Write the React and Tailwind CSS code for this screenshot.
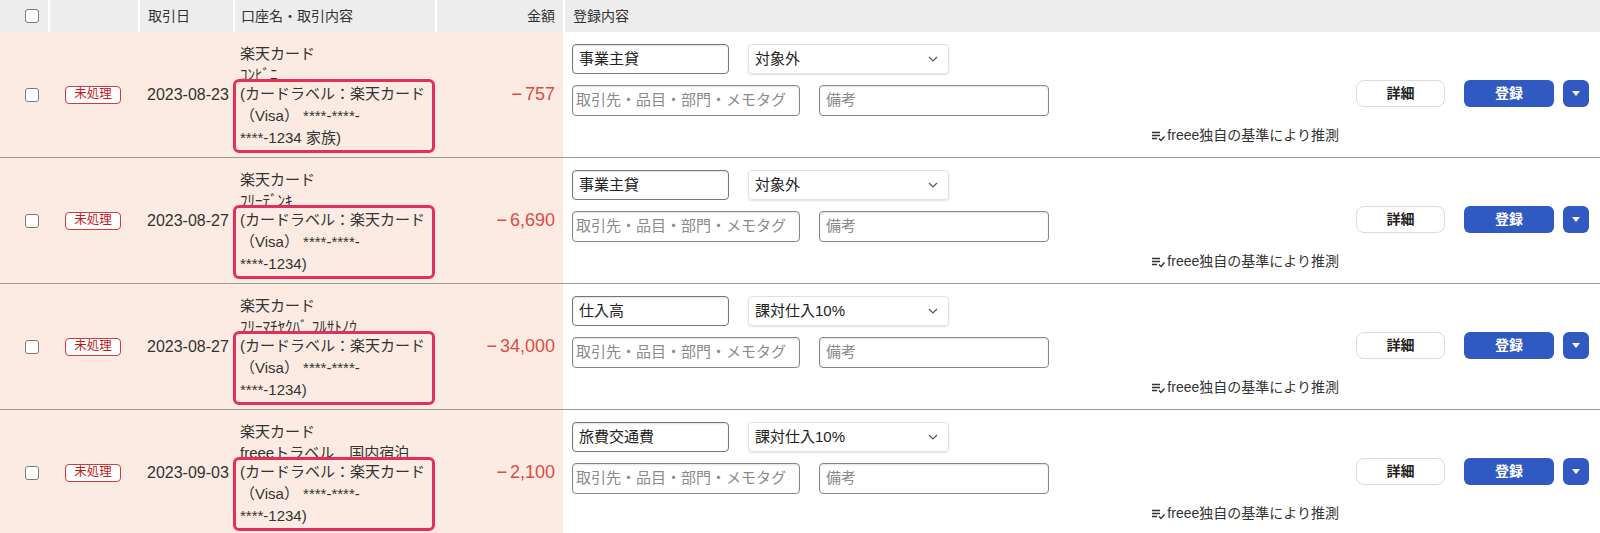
import React from "react";

const PINK = "bg-[#fbebe2]";

const rows = [
  {
    date: "2023-08-23",
    sub: "ｺﾝﾋﾞﾆ",
    last: "****-1234 家族)",
    amount: "757",
    account: "事業主貸",
    tax: "対象外",
  },
  {
    date: "2023-08-27",
    sub: "ﾌﾘｰﾃﾞﾝｷ",
    last: "****-1234)",
    amount: "6,690",
    account: "事業主貸",
    tax: "対象外",
  },
  {
    date: "2023-08-27",
    sub: "ﾌﾘｰﾏﾁﾔｸﾊﾞ ﾌﾙｻﾄﾉｳ",
    last: "****-1234)",
    amount: "34,000",
    account: "仕入高",
    tax: "課対仕入10%",
  },
  {
    date: "2023-09-03",
    sub: "freeeトラベル　国内宿泊",
    last: "****-1234)",
    amount: "2,100",
    account: "旅費交通費",
    tax: "課対仕入10%",
  },
];

function Checkbox() {
  return <div className="w-[14px] h-[14px] rounded-[3px] border border-[#7b7b7b] bg-white" />;
}

function GuessIcon() {
  return (
    <svg width="15" height="13" viewBox="0 0 15 13" className="shrink-0">
      <path d="M1 3.5h8M1 6.5h8M1 9.5h5" stroke="#333" strokeWidth="1.4" />
      <path d="M8 9.5l2 2 3.5-4" stroke="#333" strokeWidth="1.4" fill="none" />
    </svg>
  );
}

function Row({ r }) {
  return (
    <div className="flex border-b border-[#9a9a9a]">
      <div className={`w-[48px] ${PINK} flex items-center pl-[25px]`}>
        <Checkbox />
      </div>
      <div className={`w-[90px] ${PINK} flex items-center pl-[17px]`}>
        <span className="w-[56px] h-[18px] flex items-center justify-center rounded-[4px] border border-[#d23b3b] bg-white text-[12.5px] text-[#c41a1a]">
          未処理
        </span>
      </div>
      <div className={`w-[95px] ${PINK} flex items-center pl-[9px] text-[16px] text-[#333]`}>{r.date}</div>
      <div className={`w-[202px] ${PINK} px-[7px] pt-[11px] pb-[8px] text-[15px] text-[#333]`}>
        <div className="leading-[22px] whitespace-nowrap">楽天カード</div>
        <div className="relative top-[1px] leading-[18px] whitespace-nowrap">{r.sub}</div>
        <div className={`relative -mx-[7px] -my-[4px] px-[4px] py-[1px] border-[3px] border-[#e3305b] rounded-[6px] ${PINK} leading-[22px] whitespace-nowrap`}>
          <div>(カードラベル：楽天カード</div>
          <div>（Visa） ****-****-</div>
          <div>{r.last}</div>
        </div>
      </div>
      <div className={`w-[128px] ${PINK} flex items-center justify-end pr-[8px] text-[18px] text-[#de4c44]`}>
        <span className="mr-[3px]">−</span>
        <span>{r.amount}</span>
      </div>
      <div className="flex-1 bg-white flex pl-[9px] pr-[11px]">
        <div className="flex-1 pt-[12px]">
          <div className="flex gap-[19px]">
            <div className="w-[157px] h-[30px] flex items-center pl-[6px] rounded-[4px] border border-[#777] shadow-[inset_0_1px_2px_rgba(0,0,0,0.12)] text-[15px] text-[#222]">
              {r.account}
            </div>
            <div className="w-[201px] h-[30px] flex items-center justify-between pl-[6px] pr-[10px] rounded-[4px] border border-[#e2e2e2] shadow-[0_1px_2px_rgba(0,0,0,0.12)] text-[15px] text-[#222]">
              <span>{r.tax}</span>
              <svg width="10" height="6" viewBox="0 0 10 6">
                <path d="M1 1l4 4 4-4" stroke="#555" strokeWidth="1.2" fill="none" />
              </svg>
            </div>
          </div>
          <div className="flex gap-[19px] mt-[11px]">
            <div className="w-[228px] h-[31px] flex items-center pl-[3px] rounded-[4px] border border-[#888] shadow-[inset_0_1px_2px_rgba(0,0,0,0.12)] text-[15px] text-[#8a8a8a] whitespace-nowrap">
              取引先・品目・部門・メモタグ
            </div>
            <div className="w-[230px] h-[31px] flex items-center pl-[6px] rounded-[4px] border border-[#888] shadow-[inset_0_1px_2px_rgba(0,0,0,0.12)] text-[15px] text-[#8a8a8a]">
              備考
            </div>
          </div>
          <div className="flex justify-end items-center gap-[1px] mt-[11px] text-[14px] text-[#333] leading-[16px]">
            <GuessIcon />
            <span>freee独自の基準により推測</span>
          </div>
        </div>
        <div className="self-center flex items-center ml-[17px] mb-[2px]">
          <div className="w-[89px] h-[27px] flex items-center justify-center rounded-[8px] border border-[#dcdcdc] bg-white text-[14px] font-bold text-[#222]">
            詳細
          </div>
          <div className="w-[90px] h-[27px] ml-[19px] flex items-center justify-center rounded-[6px] bg-[#3159c2] text-[14px] font-bold text-white">
            登録
          </div>
          <div className="w-[26px] h-[27px] ml-[9px] flex items-center justify-center rounded-[6px] bg-[#3159c2]">
            <svg width="8" height="5" viewBox="0 0 8 5">
              <path d="M0 0h8L4 5z" fill="white" />
            </svg>
          </div>
        </div>
      </div>
    </div>
  );
}

export default function App() {
  return (
    <div className="w-[1600px] h-[533px] overflow-hidden bg-white font-['Liberation_Sans','Noto_Sans_CJK_JP',sans-serif]">
      {/* header */}
      <div className="flex h-[32px] bg-[#eeeded] text-[14px] text-[#333]">
        <div className="w-[48px] flex items-center pl-[25px]">
          <Checkbox />
        </div>
        <div className="w-[90px] border-l-2 border-white" />
        <div className="w-[95px] border-l-2 border-white flex items-center pl-[8px]">取引日</div>
        <div className="w-[202px] border-l-2 border-white flex items-center pl-[6px]">口座名・取引内容</div>
        <div className="w-[128px] border-l-2 border-white flex items-center justify-end pr-[8px]">金額</div>
        <div className="flex-1 border-l-2 border-white flex items-center pl-[8px]">登録内容</div>
      </div>
      {rows.map((r, i) => (
        <Row key={i} r={r} />
      ))}
      <div className="flex h-[20px]">
        <div className={`w-[563px] ${PINK}`} />
        <div className="flex-1 bg-white" />
      </div>
    </div>
  );
}
